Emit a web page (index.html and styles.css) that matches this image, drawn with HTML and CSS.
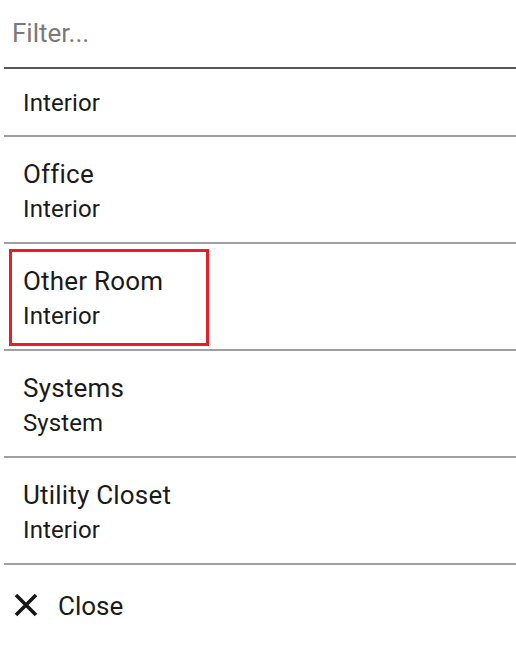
FILE: index.html
```html
<!DOCTYPE html>
<html lang="en">
<head>
    <meta charset="UTF-8">
    <meta name="viewport" content="width=device-width, initial-scale=1.0">
    <title>Select Room</title>
    <link rel="stylesheet" href="styles.css">
</head>
<body>
    <div class="picker">
        <div class="filter-box">
            <input type="text" class="filter-input" placeholder="Filter...">
        </div>

        <div class="room-list">
            <!-- list is scrolled, only the type of the first room shows -->
            <div class="room partial">
                <div class="room-type">Interior</div>
            </div>
            <div class="room">
                <div class="room-name">Office</div>
                <div class="room-type">Interior</div>
            </div>
            <div class="room selected">
                <div class="room-name">Other Room</div>
                <div class="room-type">Interior</div>
                <div class="highlight"></div>
            </div>
            <div class="room">
                <div class="room-name">Systems</div>
                <div class="room-type">System</div>
            </div>
            <div class="room">
                <div class="room-name">Utility Closet</div>
                <div class="room-type">Interior</div>
            </div>
        </div>

        <button class="close-btn">
            <svg class="close-icon" viewBox="0 0 24 24" width="24" height="24">
                <path d="M2 2 L22 22 M22 2 L2 22" stroke="#161616" stroke-width="3.6" fill="none"/>
            </svg>
            <span>Close</span>
        </button>
    </div>
</body>
</html>
```

FILE: styles.css
```css
body {
    font-family: Roboto, "Liberation Sans", sans-serif;
    margin: 0;
    padding: 0;
    background-color: #fff;
    color: #1a1a1a;
}
.picker {
    width: 516px;
    height: 646px;
    overflow: hidden;
}
.filter-box {
    margin-left: 4px;
    height: 67px;
    border-bottom: 2px solid #575757;
    display: flex;
    align-items: flex-end;
}
.filter-input {
    width: 100%;
    border: none;
    outline: none;
    padding: 0 0 17px 8px;
    margin: 0;
    font-family: Roboto, "Liberation Sans", sans-serif;
    font-size: 26px;
    line-height: 34px;
    height: 34px;
    color: #1a1a1a;
    background: transparent;
}
.filter-input::placeholder {
    color: #7a7a7a;
}
.room-list {
    margin-left: 4px;
}
.room {
    position: relative;
    padding: 19px 0 17px 19px;
    border-bottom: 2px solid #a0a0a0;
}
.room.partial {
    padding-top: 18px;
    padding-bottom: 16px;
}
.room-name {
    font-size: 26px;
    line-height: 37px;
    letter-spacing: 0.2px;
}
.room-type {
    font-size: 24px;
    line-height: 32px;
    letter-spacing: 0.1px;
}
.highlight {
    position: absolute;
    left: 5px;
    top: 5px;
    width: 200px;
    height: 97px;
    box-sizing: border-box;
    border: 3px solid #ea1c24;
}
.close-btn {
    display: flex;
    align-items: center;
    gap: 20px;
    border: none;
    background: none;
    padding: 0 0 0 14px;
    height: 81px;
    font-family: Roboto, "Liberation Sans", sans-serif;
    font-size: 26px;
    color: #1a1a1a;
    cursor: pointer;
}
.close-icon {
    display: block;
    margin-top: -2px;
}
```
